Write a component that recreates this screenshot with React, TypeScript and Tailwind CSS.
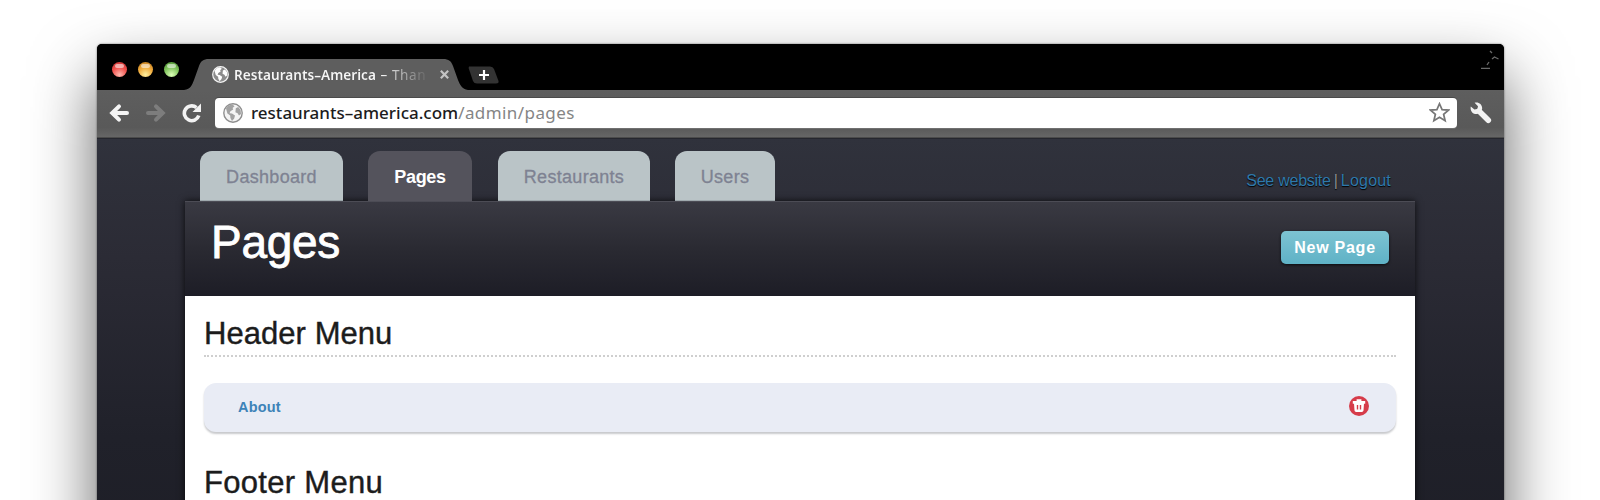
import React from "react";

const sans = "font-['Liberation_Sans',Arial,sans-serif]";
const lucida = "font-['Noto_Sans',sans-serif]";

function Globe({ className, sea, land, ring }: { className: string; sea: string; land: string; ring: string }) {
  return (
    <svg viewBox="0 0 20 20" className={className}>
      <circle cx="10" cy="10" r="9.2" fill={sea} stroke={ring} strokeWidth="1.4" />
      <path d="M3 5.5 Q5.5 1.8 9.5 1.6 L11.5 3.2 L9.6 5 L10.2 6.6 L7.4 8.2 L6.6 10.2 L9 10.6 L12 12.6 L11.2 15.4 L9 18 L7.4 15 L7.2 12.6 L4.4 10.6 Z" fill={land} />
      <path d="M12.8 5.2 L15.2 4 L17.6 7 L18 11 L16 12.6 L14.6 10.2 L12.4 9.2 Z" fill={land} />
    </svg>
  );
}

function Light({ className }: { className: string }) {
  return (
    <span className={`relative block h-[15px] w-[15px] rounded-full ${className}`}>
      <span className="absolute left-[3px] top-[2px] h-[4px] w-[9px] rounded-full bg-white/55 blur-[0.7px]" />
    </span>
  );
}

function TitleBar() {
  return (
    <div className="relative flex h-[46px] shrink-0 items-end bg-black">
      <div className="flex gap-[11px] self-start pl-[15px] pt-[18px]">
        <Light className="bg-[radial-gradient(circle_at_50%_85%,#ffb8ae_0%,#f0524e_50%,#c02c2c_100%)]" />
        <Light className="bg-[radial-gradient(circle_at_50%_85%,#fff0a0_0%,#f0ab3c_50%,#b8741c_100%)]" />
        <Light className="bg-[radial-gradient(circle_at_50%_85%,#dcffb8_0%,#80c45c_50%,#46882c_100%)]" />
      </div>
      <div className="relative ml-[5px] h-[31px] w-[284px]">
        <svg viewBox="0 0 284 31" preserveAspectRatio="none" className="absolute inset-0 h-full w-full">
          <path d="M0 31 C7 30 8 26 10 21 L15 7 C17 2 19 0 25 0 H259 C265 0 267 2 269 7 L274 21 C276 26 278 30 284 31 Z" fill="#5e5e5e" />
        </svg>
        <div className="relative flex h-full items-center pl-[28px]">
          <Globe className="h-[17px] w-[17px] shrink-0" sea="#8c8c8c" land="#ffffff" ring="#f2f2f2" />
          <span className={`${lucida} ml-[5px] w-[196px] shrink-0 overflow-hidden whitespace-nowrap bg-[linear-gradient(90deg,#f6f6f6_75%,#5e5e5e_100%)] bg-clip-text text-[13.6px] font-semibold leading-[20px] tracking-[0.02px] text-transparent`}>
            Restaurants–America <span className="ml-[1px] font-normal tracking-[0.6px]">– Than</span>
          </span>
          <svg viewBox="0 0 12 12" className="ml-[9px] h-[11px] w-[11px] shrink-0">
            <path d="M2 2 L10 10 M10 2 L2 10" stroke="#c4c4c4" strokeWidth="2.4" />
          </svg>
        </div>
      </div>
      <svg viewBox="0 0 32 18" className="mb-[6px] h-[18px] w-[32px]">
        <path d="M1 0.5 H22 Q25 0.5 26 3 L30.5 15 Q31 17.5 28 17.5 H9 Q6 17.5 5 15 L0.6 2 Z" fill="#333333" />
        <path d="M16 4 V14 M11 9 H21" stroke="#ffffff" strokeWidth="2.2" />
      </svg>
      <svg viewBox="0 0 20 22" className="absolute right-[4px] top-[5px] h-[22px] w-[20px]">
        <path d="M10 2 l2 2 M12 10 l2.5 -2 l2 1 l2 1 M9 13 l-2 3 M1 19.3 H10" stroke="#6a6a6a" strokeWidth="1.3" fill="none" />
      </svg>
    </div>
  );
}

function Toolbar() {
  return (
    <div className="flex h-[48px] shrink-0 items-center border-b border-[#4b4b4b] bg-[linear-gradient(#5e5e5e,#595959_80%,#666666)] pb-[2px] pl-[12px] pr-[12px]">
      <svg viewBox="0 0 20 20" className="h-[20px] w-[20px]">
        <path d="M18 10 H4 M10 3.4 L3.2 10 L10 16.6" stroke="#f4f4f4" strokeWidth="4" strokeLinecap="round" fill="none" />
      </svg>
      <svg viewBox="0 0 20 20" className="ml-[17px] h-[20px] w-[20px]">
        <path d="M2 10 H16 M10 3.4 L16.8 10 L10 16.6" stroke="#7d7d7d" strokeWidth="4" strokeLinecap="round" fill="none" />
      </svg>
      <svg viewBox="0 0 20 20" className="ml-[16px] h-[20px] w-[20px]">
        <path d="M14.5 4.6 A7.4 7.4 0 1 0 16.8 12.5" stroke="#f2f2f2" strokeWidth="3.6" fill="none" />
        <path d="M19 0.5 V9 H10.5 Z" fill="#f2f2f2" />
      </svg>
      <div className="ml-[13px] flex h-[30px] flex-1 items-center rounded-[4px] bg-white pl-[8px] pr-[7px] shadow-[0_1px_0_#707070,0_-1px_0_#4a4a4a]">
        <Globe className="h-[20px] w-[20px]" sea="#f4f4f4" land="#a2a2a2" ring="#8e8e8e" />
        <span className={`${lucida} ml-[8px] whitespace-nowrap text-[17px] leading-[24px] tracking-[0.42px] text-[#858585]`}>
          <span className="font-medium tracking-[0px] text-[#1c1c1c]">restaurants–america.com</span>/admin/pages
        </span>
        <svg viewBox="0 0 22 22" className="ml-auto h-[21px] w-[21px]">
          <path d="M11 1.8 L13.7 8 L20.4 8.5 L15.3 12.9 L16.9 19.6 L11 16 L5.1 19.6 L6.7 12.9 L1.6 8.5 L8.3 8 Z" fill="#fff" stroke="#777777" strokeWidth="1.8" />
        </svg>
      </div>
      <svg viewBox="0 0 22 22" className="ml-[13px] h-[22px] w-[22px]">
        <path d="M9 9 L18.3 18.3" stroke="#f2f2f2" strokeWidth="5.6" strokeLinecap="round" />
        <path d="M4.6 0.8 L8 4.2 L7.4 7 L4.4 7.6 L0.8 4.6 C-0.2 9 3 12.6 7.4 12 L12 7.6 C13 3 9 -0.4 4.6 0.8 Z" fill="#f2f2f2" />
      </svg>
    </div>
  );
}

function Tab({ label, width, active }: { label: string; width: string; active?: boolean }) {
  return (
    <div
      className={`flex h-[50px] items-center justify-center rounded-t-[12px] pt-[3px] text-[18px] ${width} ${
        active
          ? "bg-[#54535c] font-bold tracking-[-0.3px] text-white"
          : "bg-[#bac4c7] tracking-[0.3px] text-[#7e8292] shadow-[inset_0_-1px_0_#9fa9ad] [-webkit-text-stroke:0.3px_#7e8292]"
      }`}
    >
      {label}
    </div>
  );
}

function Trash() {
  return (
    <svg viewBox="0 0 20 20" className="mb-[4px] h-[20px] w-[20px]">
      <circle cx="10" cy="10" r="10" fill="#d63c4a" />
      <path d="M3.8 5 H16.2 V7.8 H3.8 Z M7.6 3.2 H12.4 V5 H7.6 Z M5 7.6 H15 L14.5 14.6 Q14.3 16 12.9 16 H7.1 Q5.7 16 5.5 14.6 Z" fill="#fff" />
      <path d="M8.5 9 V13.6 M11.5 9 V13.6" stroke="#d63c4a" strokeWidth="1.4" />
    </svg>
  );
}

export default function App() {
  return (
    <div className={`${sans} h-[500px] w-full overflow-hidden bg-white pl-[97px] pt-[44px]`}>
      <div className="flex h-[700px] w-[1407px] flex-col overflow-hidden rounded-t-[5px] bg-black shadow-[0_32px_64px_rgba(0,0,0,0.62),0_0_2px_rgba(0,0,0,0.6)]">
        <TitleBar />
        <Toolbar />
        <div className="min-h-0 flex-1 bg-[linear-gradient(#30323c_0px,#2b2b35_120px,#20212a_300px,#1c1c24_500px)] pl-[88px] pt-[13px] shadow-[inset_0_1px_0_#25262e]">
          <div className="flex w-[1230px] items-start pl-[15px] pr-[24px]">
            <div className="flex">
              <Tab label="Dashboard" width="w-[143px]" />
              <div className="mx-[25px]">
                <Tab label="Pages" width="w-[104px]" active />
              </div>
              <div className="ml-[1px] mr-[25px]">
                <Tab label="Restaurants" width="w-[152px]" />
              </div>
              <Tab label="Users" width="w-[100px]" />
            </div>
            <div className="ml-auto mt-[20px] flex whitespace-nowrap text-[16px] leading-[20px] text-[#2f79ab] [text-shadow:0_1px_1px_#000]">
              <a className="tracking-[-0.25px]">See website</a>
              <span className="mx-[3px] text-[#8d8d95]">|</span>
              <a className="tracking-[0.2px]">Logout</a>
            </div>
          </div>
          <div className="h-[600px] w-[1230px] bg-white shadow-[0_0_7px_rgba(0,0,0,0.8)]">
            <div className="flex h-[95px] items-start justify-between bg-[linear-gradient(#3a3a43,#2a2a32_50%,#1d1d26)] pl-[26px] pr-[26px] shadow-[inset_0_1px_0_#4c4c55]">
              <h1 className="mt-[15px] text-[46px] leading-[53px] tracking-[-0.3px] text-white [-webkit-text-stroke:0.8px_white]">Pages</h1>
              <button className="mt-[30px] flex h-[33px] w-[108px] items-center justify-center rounded-[5px] bg-[linear-gradient(#7dc3d2,#5fb2c6)] text-[16px] font-bold tracking-[0.75px] text-white shadow-[0_1px_3px_rgba(0,0,0,0.7)]">
                New Page
              </button>
            </div>
            <div className="px-[19px]">
              <h2 className="h-[61px] border-b-2 border-dotted border-[#cfcfcf] pt-[19px] text-[31px] leading-[38px] tracking-[0.05px] text-[#1c1c1c] [-webkit-text-stroke:0.4px_#1c1c1c]">Header Menu</h2>
              <div className="mt-[26px] flex h-[49px] items-center justify-between rounded-[12px] bg-[#e9ecf5] pl-[34px] pr-[27px] shadow-[0_2px_2px_#c8c9cc]">
                <span className="text-[14.5px] font-bold tracking-[0.2px] text-[#3d83b8]">About</span>
                <Trash />
              </div>
              <h2 className="mt-[32px] text-[31px] leading-[38px] tracking-[0.3px] text-[#1c1c1c] [-webkit-text-stroke:0.4px_#1c1c1c]">Footer Menu</h2>
            </div>
          </div>
        </div>
      </div>
    </div>
  );
}
